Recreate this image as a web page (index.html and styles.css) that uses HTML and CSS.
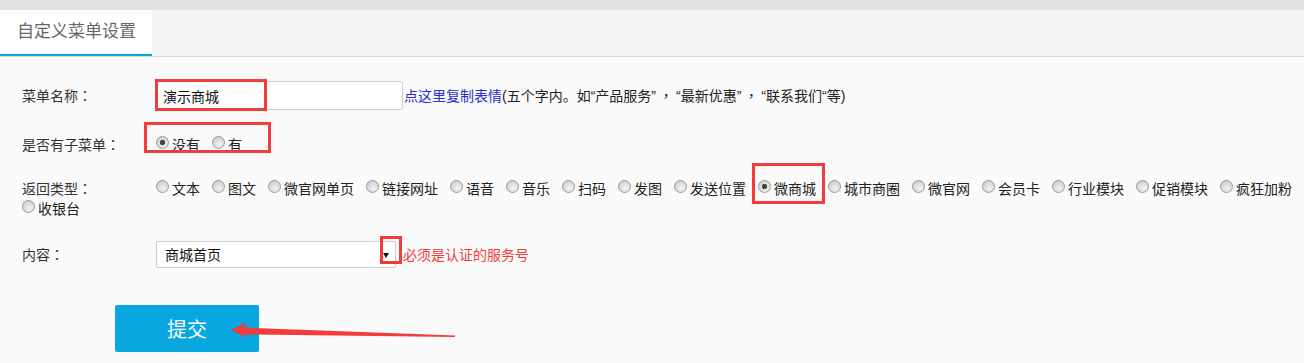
FILE: index.html
```html
<!DOCTYPE html>
<html>
<head>
  <meta charset="utf-8" />
  <title>自定义菜单设置</title>
  <link rel="stylesheet" href="styles.css">
</head>
<body>
  <div class="page">
    <div class="topbar"></div>
    <div class="tabs">
      <div class="tab active">自定义菜单设置</div>
    </div>

    <form class="menu-form">
      <div class="row row-name">
        <span class="row-label">菜单名称<span class="colon">：</span></span>
        <input type="text" class="text-input" value="演示商城">
        <a href="#" class="tip-link">点这里复制表情</a><span class="tip">(五个字内。如“产品服务”<span class="comma">，</span>“最新优惠”<span class="comma">，</span>“联系我们“等)</span>
      </div>

      <div class="row row-sub">
        <span class="row-label">是否有子菜单<span class="colon">：</span></span>
        <div class="options">
          <label class="opt"><input type="radio" name="sub" checked>没有</label>
          <label class="opt"><input type="radio" name="sub">有</label>
        </div>
      </div>

      <div class="row row-type">
        <span class="row-label">返回类型<span class="colon">：</span></span>
        <label class="opt"><input type="radio" name="type">文本</label>
        <label class="opt"><input type="radio" name="type">图文</label>
        <label class="opt"><input type="radio" name="type">微官网单页</label>
        <label class="opt"><input type="radio" name="type">链接网址</label>
        <label class="opt"><input type="radio" name="type">语音</label>
        <label class="opt"><input type="radio" name="type">音乐</label>
        <label class="opt"><input type="radio" name="type">扫码</label>
        <label class="opt"><input type="radio" name="type">发图</label>
        <label class="opt"><input type="radio" name="type">发送位置</label>
        <label class="opt"><input type="radio" name="type" checked>微商城</label>
        <label class="opt"><input type="radio" name="type">城市商圈</label>
        <label class="opt"><input type="radio" name="type">微官网</label>
        <label class="opt"><input type="radio" name="type">会员卡</label>
        <label class="opt"><input type="radio" name="type">行业模块</label>
        <label class="opt"><input type="radio" name="type">促销模块</label>
        <label class="opt"><input type="radio" name="type">疯狂加粉</label>
        <label class="opt"><input type="radio" name="type">收银台</label>
      </div>

      <div class="row row-content">
        <span class="row-label">内容<span class="colon">：</span></span>
        <div class="select-box">
          <select class="select">
            <option>商城首页</option>
          </select>
          <span class="caret"></span>
        </div>
        <span class="hint">必须是认证的服务号</span>
      </div>

      <div class="row row-submit">
        <button type="button" class="btn-submit">提交</button>
      </div>
    </form>

    <!-- annotations drawn over the screenshot -->
    <div class="mark mark-name"></div>
    <div class="mark mark-sub"></div>
    <div class="mark mark-shop"></div>
    <div class="mark mark-caret"></div>
    <svg class="arrow" width="1304" height="363" viewBox="0 0 1304 363">
      <polygon points="231,330 247,322 244,327.5 455,335.5 455,337 244,334.5 247,338" fill="#f23b3b" />
    </svg>
  </div>
</body>
</html>
```

FILE: styles.css
```css
body {
  margin: 0;
  font-family: "Liberation Sans", "Noto Sans CJK SC", sans-serif;
  font-size: 14px;
  color: #222;
  background: #fafafa;
  text-spacing-trim: space-all;
}

.page {
  position: relative;
  height: 363px;
  overflow: hidden;
}

.topbar {
  height: 10px;
  background: #e1e1e1;
}

.tabs {
  display: flex;
  height: 46px;
  background: #f3f3f3;
  border-bottom: 1px solid #d9d9d9;
}

.tab {
  width: 152px;
  box-sizing: border-box;
  padding-left: 17px;
  line-height: 44px;
  font-size: 17px;
  color: #666;
  background: #fff;
  border-bottom: 2px solid #0aa5de;
}

.menu-form {
  padding-left: 22px;
}

.row {
  display: flex;
  align-items: center;
  line-height: 20px;
}

.row-label {
  flex: none;
  width: 134px;
  height: 20px;
  color: #333;
}

/* centred full-width punctuation, as in the original font */
.colon,
.comma {
  font-family: "Noto Sans CJK TC", "Noto Sans CJK SC", sans-serif;
  line-height: 14px;
}

.comma {
  padding: 0 3px;
}

.row-name {
  margin-top: 24px;
  height: 29px;
}

.text-input {
  width: 247px;
  height: 29px;
  box-sizing: border-box;
  margin: 0;
  padding: 0 6px;
  border: 1px solid #ccc;
  border-radius: 3px;
  background: #fff;
  font: inherit;
  color: #111;
}

.tip-link {
  margin-left: 1px;
  color: #2b2bd6;
  text-decoration: none;
}

.tip {
  color: #222;
}

.options {
  display: flex;
  column-gap: 12px;
}

.row-sub {
  margin-top: 25px;
}

.row-type {
  margin-top: 24px;
  flex-wrap: wrap;
  column-gap: 12px;
}

.row-type .row-label {
  margin-right: -12px;
}

.opt {
  display: inline-flex;
  align-items: flex-start;
  white-space: nowrap;
  color: #222;
}

.opt input {
  appearance: none;
  -webkit-appearance: none;
  flex: none;
  width: 13px;
  height: 13px;
  margin: 1px 3px 0 0;
  box-sizing: border-box;
  border: 1px solid #999;
  border-radius: 50%;
  background: radial-gradient(circle at 62% 68%, #f4f4f4 0, #d9d9d9 55%, #c8c8c8 100%);
}

.opt input:checked {
  background: radial-gradient(circle, #444 0, #444 2.4px, transparent 3px),
    radial-gradient(circle at 62% 68%, #f4f4f4 0, #d9d9d9 55%, #c8c8c8 100%);
}

.row-content {
  margin-top: 22px;
  height: 27px;
}

.select-box {
  display: flex;
  align-items: center;
  width: 240px;
  height: 27px;
  box-sizing: border-box;
  padding: 0 6px 0 8px;
  border: 1px solid #ccc;
  border-radius: 2px;
  background: #fff;
}

.select {
  flex: 1;
  appearance: none;
  -webkit-appearance: none;
  border: none;
  background: transparent;
  padding: 0;
  font: inherit;
  color: #111;
}

.caret {
  width: 0;
  height: 0;
  border-left: 3px solid transparent;
  border-right: 3px solid transparent;
  border-top: 5px solid #111;
  margin-top: 2px;
}

.hint {
  margin-left: 7px;
  color: #f23b3b;
}

.row-submit {
  margin-top: 37px;
  padding-left: 93px;
}

.btn-submit {
  width: 144px;
  height: 47px;
  border: none;
  border-radius: 2px;
  background: #08a7df;
  color: #fff;
  font-family: inherit;
  font-size: 20px;
  cursor: pointer;
}

.mark {
  position: absolute;
  box-sizing: border-box;
  border: 3px solid #f23b3b;
}

.mark-name {
  left: 155px;
  top: 79px;
  width: 112px;
  height: 32px;
}

.mark-sub {
  left: 144px;
  top: 122px;
  width: 127px;
  height: 31px;
}

.mark-shop {
  left: 752px;
  top: 163px;
  width: 73px;
  height: 41px;
}

.mark-caret {
  left: 380px;
  top: 236px;
  width: 22px;
  height: 28px;
}

.arrow {
  position: absolute;
  left: 0;
  top: 0;
  pointer-events: none;
}
```
